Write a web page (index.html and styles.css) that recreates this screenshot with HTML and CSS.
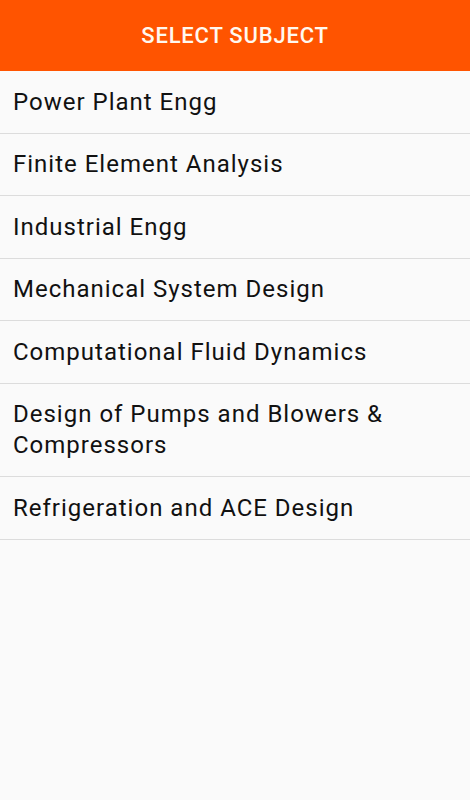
FILE: index.html
```html
<!DOCTYPE html>
<html lang="en">
<head>
    <meta charset="UTF-8">
    <meta name="viewport" content="width=device-width, initial-scale=1.0">
    <title>Select Subject</title>
    <link rel="stylesheet" href="styles.css">
</head>
<body>
    <header class="app-bar">
        <h1>SELECT SUBJECT</h1>
    </header>

    <ul class="subject-list">
        <li>Power Plant Engg</li>
        <li>Finite Element Analysis</li>
        <li>Industrial Engg</li>
        <li>Mechanical System Design</li>
        <li>Computational Fluid Dynamics</li>
        <li>Design of Pumps and Blowers &amp; Compressors</li>
        <li>Refrigeration and ACE Design</li>
    </ul>
</body>
</html>
```

FILE: styles.css
```css
body {
    margin: 0;
    font-family: Roboto, "Liberation Sans", Arial, sans-serif;
    background-color: #fafafa;
    color: #111;
    min-height: 800px;
}
.app-bar {
    height: 71px;
    background-color: #ff5400; /* orange bar */
    display: flex;
    align-items: center;
    justify-content: center;
}
.app-bar h1 {
    margin: 0;
    color: #fff8f0;
    font-size: 22px;
    font-weight: 500;
    letter-spacing: 0.8px;
}
.subject-list {
    list-style: none;
    margin: 0;
    padding: 0;
}
.subject-list li {
    padding: 15.75px 60px 14.75px 13px;
    font-size: 24px;
    line-height: 31px;
    letter-spacing: 1px;
    border-bottom: 1px solid #dcdcdc;
}
```
